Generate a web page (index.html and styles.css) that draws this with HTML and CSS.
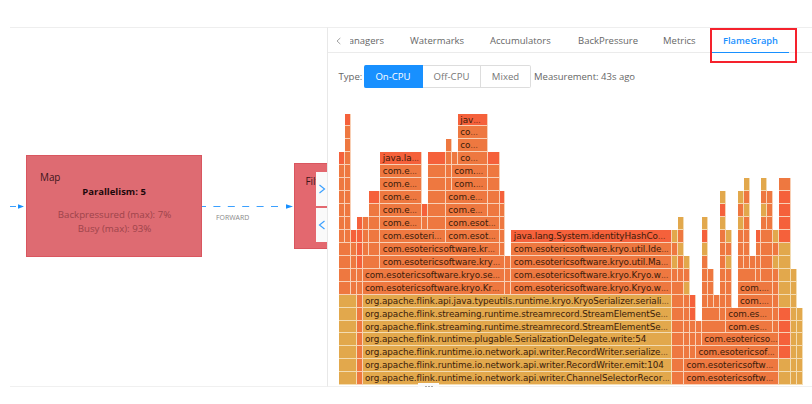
FILE: index.html
```html
<!DOCTYPE html>
<html lang="en">
<head>
<meta charset="utf-8">
<title>Flink job</title>
<link rel="stylesheet" href="styles.css">
</head>
<body>
<div class="page">
  <section class="graph">
    <svg class="edges" width="317" height="358" viewBox="0 0 317 358">
      <g stroke="#3ba0ff" stroke-width="1" fill="none">
        <path d="M0 178.5H6"/>
        <path d="M192 178.5H275" stroke-dasharray="7 7.4" stroke-dashoffset="3"/>
      </g>
      <path d="M8 176.2L14 178.5L8 180.8ZM276 176.2L283 178.5L276 180.8Z" fill="#1890ff"/>
    </svg>
    <span class="edge-label">FORWARD</span>
    <div class="node node-map">
      <div class="node-name">Map</div>
      <div class="node-par">Parallelism: 5</div>
      <div class="node-stat">Backpressured (max): 7%</div>
      <div class="node-stat">Busy (max): 93%</div>
    </div>
    <div class="node node-filter"><div class="node-name">Filter</div></div>
    <div class="toggles">
      <div class="toggle"><svg width="8" height="10" viewBox="0 0 8 10"><path d="M1.5 1L6.5 5L1.5 9"/></svg></div>
      <div class="toggle"><svg width="8" height="10" viewBox="0 0 8 10"><path d="M6.5 1L1.5 5L6.5 9"/></svg></div>
    </div>
  </section>
  <section class="panel">
    <nav class="tabs">
      <svg class="prev" width="5" height="8" viewBox="0 0 5 8"><path d="M4.3 1L1 4L4.3 7"/></svg>
      <div class="tab tab-cut"><span>Managers</span></div>
      <div class="tab t2">Watermarks</div>
      <div class="tab t3">Accumulators</div>
      <div class="tab t4">BackPressure</div>
      <div class="tab t5">Metrics</div>
      <div class="tab active">FlameGraph<i class="mark"></i></div>
    </nav>
    <div class="controls">
      <span class="type">Type:</span>
      <div class="group">
        <button class="btn on">On-CPU</button><button class="btn off">Off-CPU</button><button class="btn mixed">Mixed</button>
      </div>
      <span class="measure">Measurement: 43s ago</span>
    </div>
    <div class="flame" id="flame"></div>
  </section>
  <div class="handle"><i></i><i></i><i></i></div>
</div>
<script src="flame.js"></script>
</body>
</html>
```
FILE: styles.css
```css
* { box-sizing: border-box; }
body { margin: 0; background: #fff; overflow: hidden; font-family: "Open Sans", "Noto Sans", sans-serif; font-size: 9.5px; color: #666; }
.page { position: relative; display: flex; height: 387px; width: 812px; padding: 27px 0 0 10px; }
.graph { position: relative; width: 317px; height: 360px; border-top: 1px solid #eee; border-bottom: 1px solid #f0f0f0; overflow: hidden; }
.edges { position: absolute; left: 0; top: 0; }
.edge-label { position: absolute; left: 206px; top: 185px; font-size: 6.9px; line-height: 10px; color: #888; }
.node { position: absolute; background: #de6b72; border: 1px solid #d9565f; color: #321015; text-align: center; line-height: 13.6px; }
.node-map { left: 16px; top: 127px; width: 176px; height: 102px; padding: 15px 0 0 13px; }
.node-name { text-align: left; font-size: 9.9px; font-weight: 500; color: #3c151a; }
.node-par { font-weight: 700; color: #1d080b; margin-left: -13px; }
.node-stat { color: #9d444b; margin-left: -12px; font-size: 9.7px; }
.node-par + .node-stat { margin-top: 10px; }
.node-filter { left: 284px; top: 135px; width: 60px; height: 86px; background: #e3686f; padding: 11px 0 0 10.5px; }
.toggles { position: absolute; left: 305.5px; top: 144px; display: flex; flex-direction: column; gap: 2px; }
.toggle { width: 12px; height: 34px; background: #fafafa; display: flex; align-items: center; padding-left: 2px; }
.toggle svg { flex: none; fill: none; stroke: #3ba0ff; stroke-width: 1.2; }
.panel { width: 485px; height: 360px; border-left: 1px solid #e8e8e8; border-top: 1px solid #eee; border-bottom: 1px solid #f0f0f0; display: flex; flex-direction: column; }
.tabs { height: 25px; flex: none; display: flex; border-bottom: 1px solid #ebebeb; line-height: 26px; font-size: 9.5px; font-weight: 500; padding-left: 8px; }
.prev { margin: 9px 9px 0 0; fill: none; stroke: #999; stroke-width: .9; flex: none; }
.tab { white-space: nowrap; flex: none; }
.tab-cut { width: 34px; margin-right: 26px; overflow: hidden; display: flex; justify-content: flex-end; }
.t2 { width: 80px; }
.t3 { width: 88px; }
.t4 { width: 85px; }
.t5 { width: 48px; }
.active { position: relative; height: 25px; width: 78px; padding-left: 12px; color: #1890ff; font-weight: 600; font-size: 9.3px; border-bottom: 1px solid #1890ff; }
.mark { position: absolute; left: -1px; top: 0; width: 87px; height: 35px; border: 2px solid #f5222d; }
.controls { display: flex; align-items: center; margin: 12px 0 0 10.5px; height: 23px; font-size: 9.6px; }
.type { width: 25.5px; }
.group { display: flex; height: 23px; }
.btn { font: inherit; color: #777; background: #fff; padding: 0; border: 1px solid #ddd; border-left: 0; }
.on { width: 59px; background: #1890ff; border-color: #1890ff; color: #fff; border-radius: 2px 0 0 2px; font-weight: 500; }
.off { width: 58px; }
.mixed { width: 50px; border-radius: 0 2px 2px 0; }
.measure { margin-left: 3px; white-space: nowrap; font-size: 9.5px; }
.flame { display: grid; flex: none; width: 465px; margin: 25.5px 0 0 10.8px; grid-template-columns: repeat(78, 5.9615px); grid-template-rows: repeat(21, 12.95px); font: 8.8px/12.2px "DejaVu Sans", sans-serif; letter-spacing: -.06px; color: #3a1b0a; }
.frame { border: solid #f8d0b6; border-width: 0 1px 1px 0; padding-left: 2.4px; white-space: nowrap; min-width: 0; }
.r { background: #f5613b; }
.o { background: #ee7840; }
.g { background: #e2a84c; border-color: #f3dcb2; }
.dots { opacity: .6; letter-spacing: -.4px; }
.handle { position: absolute; left: 418px; top: 383px; width: 21px; height: 7px; background: #fafafa; display: flex; justify-content: center; align-items: center; gap: 1px; }
.handle i { width: 2px; height: 2px; background: #aaa; }
```
FILE: flame.js
```
// [row, first column, end column, tone, label]
const frames = [];
const add = (row, from, to, tone, label) => frames.push([row, from, to, tone, label]);
// A stack of unlabelled frames, one per tone letter, going down from a row.
const stack = (row, from, to, tones) => [...tones].forEach((t, i) => add(row + i, from, to, t));

stack(3, 0, 1, 'roooooo');
stack(0, 1, 2, 'rooooooooo');
stack(10, 0, 2, 'oooo');
stack(9, 2, 3, 'roooo');
stack(14, 0, 3, 'ggggggg');
stack(8, 3, 4, 'rrrrooooooooo');
stack(8, 4, 5, 'ooo');
stack(6, 5, 7, 'roooo');
add(11, 4, 7, 'o');
add(3, 7, 14, 'r', 'java.la…');
for (let r = 4; r < 9; r++) add(r, 7, 14, 'o', 'com.e…');
stack(7, 14, 15, 'ro');
stack(3, 15, 18, 'rooooo');
stack(2, 18, 19, 'oooo');
stack(3, 19, 20, 'o');
add(0, 20, 25, 'r', 'jav…');
for (let r = 1; r < 4; r++) add(r, 20, 25, 'o', 'co…');
add(4, 19, 25, 'o', 'com.…');
add(5, 19, 25, 'o', 'com.…');
add(6, 18, 25, 'o', 'com.e…');
add(7, 18, 25, 'o', 'com.e…');
stack(3, 25, 27, 'roooo');
add(8, 18, 27, 'o', 'com.esot…');
add(9, 18, 27, 'o', 'com.esot…');
stack(6, 27, 28, 'rooooo');
add(9, 7, 18, 'o', 'com.esoteri…');
add(10, 7, 27, 'o', 'com.esotericsoftware.kr…');
add(11, 7, 28, 'o', 'com.esotericsoftware.kry…');
add(12, 4, 28, 'o', 'com.esotericsoftware.kryo.se…');
add(13, 4, 28, 'o', 'com.esotericsoftware.kryo.Kr…');
stack(11, 28, 29, 'ooo');
add(9, 29, 56, 'r', 'java.lang.System.identityHashCo…');
add(10, 29, 56, 'o', 'com.esotericsoftware.kryo.util.Ide…');
add(11, 29, 56, 'o', 'com.esotericsoftware.kryo.util.Ma…');
add(12, 29, 56, 'o', 'com.esotericsoftware.kryo.Kryo.w…');
add(13, 29, 56, 'o', 'com.esotericsoftware.kryo.Kryo.w…');
add(14, 4, 56, 'g', 'org.apache.flink.api.java.typeutils.runtime.kryo.KryoSerializer.seriali…');
add(15, 4, 56, 'g', 'org.apache.flink.streaming.runtime.streamrecord.StreamElementSe…');
add(16, 4, 56, 'g', 'org.apache.flink.streaming.runtime.streamrecord.StreamElementSe…');
add(17, 4, 56, 'g', 'org.apache.flink.runtime.plugable.SerializationDelegate.write:54');
add(18, 4, 56, 'g', 'org.apache.flink.runtime.io.network.api.writer.RecordWriter.serialize…');
add(19, 4, 56, 'g', 'org.apache.flink.runtime.io.network.api.writer.RecordWriter.emit:104');
add(20, 4, 56, 'g', 'org.apache.flink.runtime.io.network.api.writer.ChannelSelectorRecor…');

stack(9, 56, 57, 'gogo');
stack(8, 57, 58, 'gogoo');
stack(13, 56, 58, 'oooooooo');
stack(11, 58, 59, 'gogooooo');
stack(14, 59, 60, 'rrooo');
stack(16, 60, 61, 'oo');
stack(8, 61, 62, 'grgoooo');
stack(12, 62, 63, 'ooo');
add(14, 63, 64, 'o');
stack(6, 64, 65, 'grgoooooo');
stack(15, 64, 65, 'o');
stack(9, 65, 66, 'gogooo');
add(15, 61, 64, 'o');
add(16, 61, 65, 'o');
stack(6, 67, 68, 'gogooo');
stack(5, 68, 69, 'gogoooo');
stack(11, 69, 70, 'o');
add(12, 67, 70, 'o');
stack(9, 70, 71, 'rooo');
stack(5, 71, 72, 'gogo');
stack(6, 72, 73, 'ooo');
stack(9, 71, 73, 'oooo');
stack(9, 73, 74, 'gogooooo');
add(13, 67, 73, 'o', 'com.…');
add(14, 67, 73, 'o', 'com.…');
add(15, 65, 73, 'o', 'com.es…');
add(16, 65, 73, 'o', 'com.es…');
add(17, 61, 74, 'o', 'com.esotericso…');
add(18, 60, 74, 'o', 'com.esotericsof…');
add(19, 58, 74, 'o', 'com.esotericsoftw…');
add(20, 58, 74, 'o', 'com.esotericsoftw…');
stack(5, 74, 76, 'orrrrgggggrrrrgg');
stack(12, 76, 77, 'ggggggggg');
stack(15, 77, 78, 'gggggg');

const flame = document.getElementById('flame');
// The first frame given for a slot wins, except that labelled frames replace plain ones.
const slots = new Map();
for (const f of frames) {
  const key = f[0] + ':' + f[1];
  if (!slots.has(key) || f[4]) slots.set(key, f);
}
// A one-column stack gives way where a wider frame of its row covers it.
const covered = (f) => frames.some((w) => w !== f && w[0] === f[0] && w[1] <= f[1] && w[2] >= f[2] && w[2] - w[1] > f[2] - f[1]);
for (const f of slots.values()) {
  if (covered(f)) continue;
  const [row, from, to, tone, label] = f;
  const el = document.createElement('div');
  el.className = 'frame ' + tone;
  el.style.gridArea = `${row + 1} / ${from + 1} / ${row + 2} / ${to + 1}`;
  if (label) {
    const cut = label.endsWith('…');
    el.append(cut ? label.slice(0, -1) : label);
    if (cut) {
      const dots = document.createElement('span');
      dots.className = 'dots';
      dots.textContent = '...';
      el.append(dots);
    }
  }
  flame.append(el);
}
```
